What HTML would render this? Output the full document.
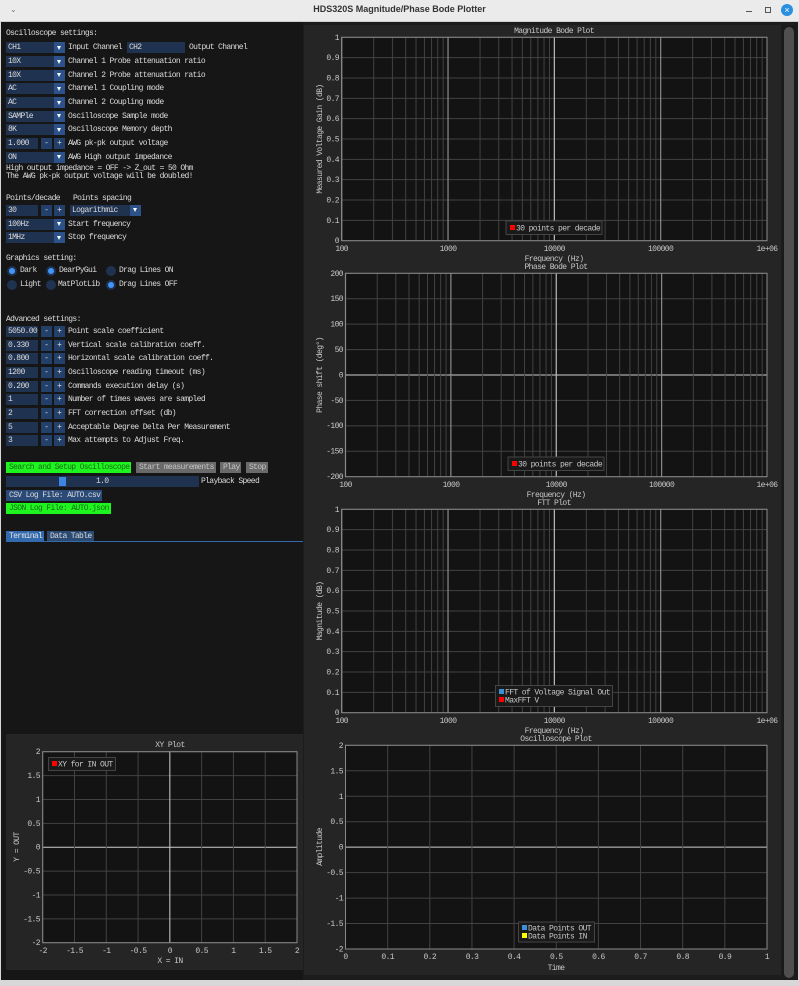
<!DOCTYPE html>
<html><head><meta charset="utf-8">
<style>
*{margin:0;padding:0;box-sizing:border-box}
body{width:799px;height:986px;background:#d8d8d8;position:relative;overflow:hidden;font-family:"Liberation Mono",monospace}
.a{position:absolute}
.t{position:absolute;font-size:8px;letter-spacing:-0.65px;color:#dcdcdc;white-space:pre;line-height:11px}
.f{position:absolute;height:11px;background:#1f3250;font-size:8px;letter-spacing:-0.65px;color:#dcdcdc;line-height:11px;padding-left:2px;white-space:pre}
.ar{position:absolute;right:0;top:0;width:11px;height:11px;background:#2d5289}
.ar:after{content:"";position:absolute;left:3px;top:3.5px;border-left:2.5px solid transparent;border-right:2.5px solid transparent;border-top:4px solid #fff}
.b{position:absolute;width:11px;height:11px;background:#23406a;color:#ddd;font-size:8px;line-height:11px;text-align:center}
.rd{position:absolute;width:10px;height:10px;border-radius:50%;background:#1f3250}
.rd.on:after{content:"";position:absolute;left:2px;top:2px;width:6px;height:6px;border-radius:50%;background:#4296fa}
.btn{position:absolute;height:11px;font-size:8px;letter-spacing:-0.65px;line-height:11px;padding-left:3px;white-space:pre}
svg text{font-family:"Liberation Mono",monospace;font-size:8px;letter-spacing:-0.6px;fill:#c8c8c8}
</style></head><body>
<div class="a" style="left:0;top:0;width:799px;height:22px;background:#ebebeb;border-bottom:1px solid #cfcfcf"></div>
<div class="a" style="left:0;top:4px;width:799px;text-align:center;font:bold 9px 'Liberation Sans',sans-serif;color:#333">HDS320S Magnitude/Phase Bode Plotter</div>
<div class="a" style="left:10px;top:5px;font:8px 'Liberation Sans';color:#777">&#8964;</div>
<div class="a" style="left:746px;top:11px;width:6px;height:1px;background:#555"></div>
<div class="a" style="left:765px;top:7px;width:6px;height:6px;border:1px solid #555"></div>
<div class="a" style="left:781px;top:4px;width:12px;height:12px;border-radius:50%;background:#2a8fde;color:#fff;font:9px 'Liberation Sans';text-align:center;line-height:12px">&#215;</div>
<div class="a" style="left:1px;top:22px;width:797px;height:958px;background:#161616"></div>
<div class="a" style="left:303px;top:22px;width:495px;height:958px;background:#1c1c1c"></div>
<div class="a" style="left:304px;top:25px;width:477px;height:950px;background:#252525"></div>
<div class="a" style="left:782px;top:25px;width:14px;height:951px;background:#1a1a1a"></div>
<div class="a" style="left:784px;top:27px;width:10px;height:951px;border-radius:5px;background:#4f4f4f"></div>
<div class="a" style="left:6px;top:734px;width:297px;height:236px;background:#252525"></div>

<div class="t" style="left:6px;top:28px">Oscilloscope settings:</div>
<div class="f" style="left:6px;top:42px;width:59px">CH1<div class="ar"></div></div><div class="t" style="left:68px;top:42px">Input Channel</div>
<div class="f" style="left:127px;top:42px;width:58px">CH2</div><div class="t" style="left:189px;top:42px">Output Channel</div>
<div class="f" style="left:6px;top:56px;width:59px">10X<div class="ar"></div></div><div class="t" style="left:68px;top:56px">Channel 1 Probe attenuation ratio</div>
<div class="f" style="left:6px;top:69.5px;width:59px">10X<div class="ar"></div></div><div class="t" style="left:68px;top:69.5px">Channel 2 Probe attenuation ratio</div>
<div class="f" style="left:6px;top:83px;width:59px">AC<div class="ar"></div></div><div class="t" style="left:68px;top:83px">Channel 1 Coupling mode</div>
<div class="f" style="left:6px;top:97px;width:59px">AC<div class="ar"></div></div><div class="t" style="left:68px;top:97px">Channel 2 Coupling mode</div>
<div class="f" style="left:6px;top:110.5px;width:59px">SAMPle<div class="ar"></div></div><div class="t" style="left:68px;top:110.5px">Oscilloscope Sample mode</div>
<div class="f" style="left:6px;top:124px;width:59px">8K<div class="ar"></div></div><div class="t" style="left:68px;top:124px">Oscilloscope Memory depth</div>
<div class="f" style="left:6px;top:138px;width:32px">1.000</div><div class="b" style="left:41px;top:138px">-</div><div class="b" style="left:54px;top:138px">+</div><div class="t" style="left:68px;top:138px">AWG pk-pk output voltage</div>
<div class="f" style="left:6px;top:151.5px;width:59px">ON<div class="ar"></div></div><div class="t" style="left:68px;top:151.5px">AWG High output impedance</div>
<div class="t" style="left:6px;top:165px;line-height:8px">High output impedance = OFF -&gt; Z_out = 50 Ohm
The AWG pk-pk output voltage will be doubled!</div>
<div class="t" style="left:6px;top:192.5px">Points/decade</div><div class="t" style="left:73px;top:192.5px">Points spacing</div>
<div class="f" style="left:6px;top:204.5px;width:32px">30</div><div class="b" style="left:41px;top:204.5px">-</div><div class="b" style="left:54px;top:204.5px">+</div>
<div class="f" style="left:70px;top:204.5px;width:71px">Logarithmic<div class="ar"></div></div>
<div class="f" style="left:6px;top:218.5px;width:59px">100Hz<div class="ar"></div></div><div class="t" style="left:68px;top:218.5px">Start frequency</div>
<div class="f" style="left:6px;top:232px;width:59px">1MHz<div class="ar"></div></div><div class="t" style="left:68px;top:232px">Stop frequency</div>

<div class="t" style="left:6px;top:253px">Graphics setting:</div>
<div class="rd on" style="left:7px;top:266px"></div><div class="t" style="left:20px;top:265px">Dark</div>
<div class="rd on" style="left:46px;top:266px"></div><div class="t" style="left:59px;top:265px">DearPyGui</div>
<div class="rd" style="left:106px;top:266px"></div><div class="t" style="left:119px;top:265px">Drag Lines ON</div>
<div class="rd" style="left:7px;top:279.5px"></div><div class="t" style="left:20px;top:279px">Light</div>
<div class="rd" style="left:46px;top:279.5px"></div><div class="t" style="left:58px;top:279px">MatPlotLib</div>
<div class="rd on" style="left:106px;top:279.5px"></div><div class="t" style="left:119px;top:279px">Drag Lines OFF</div>

<div class="t" style="left:6px;top:314px">Advanced settings:</div>
<div class="f" style="left:6px;top:326px;width:32px">5050.00</div><div class="b" style="left:41px;top:326px">-</div><div class="b" style="left:54px;top:326px">+</div><div class="t" style="left:68px;top:326px">Point scale coefficient</div>
<div class="f" style="left:6px;top:339.5px;width:32px">0.330</div><div class="b" style="left:41px;top:339.5px">-</div><div class="b" style="left:54px;top:339.5px">+</div><div class="t" style="left:68px;top:339.5px">Vertical scale calibration coeff.</div>
<div class="f" style="left:6px;top:353px;width:32px">0.800</div><div class="b" style="left:41px;top:353px">-</div><div class="b" style="left:54px;top:353px">+</div><div class="t" style="left:68px;top:353px">Horizontal scale calibration coeff.</div>
<div class="f" style="left:6px;top:367px;width:32px">1200</div><div class="b" style="left:41px;top:367px">-</div><div class="b" style="left:54px;top:367px">+</div><div class="t" style="left:68px;top:367px">Oscilloscope reading timeout (ms)</div>
<div class="f" style="left:6px;top:380.5px;width:32px">0.200</div><div class="b" style="left:41px;top:380.5px">-</div><div class="b" style="left:54px;top:380.5px">+</div><div class="t" style="left:68px;top:380.5px">Commands execution delay (s)</div>
<div class="f" style="left:6px;top:394px;width:32px">1</div><div class="b" style="left:41px;top:394px">-</div><div class="b" style="left:54px;top:394px">+</div><div class="t" style="left:68px;top:394px">Number of times waves are sampled</div>
<div class="f" style="left:6px;top:408px;width:32px">2</div><div class="b" style="left:41px;top:408px">-</div><div class="b" style="left:54px;top:408px">+</div><div class="t" style="left:68px;top:408px">FFT correction offset (db)</div>
<div class="f" style="left:6px;top:421.5px;width:32px">5</div><div class="b" style="left:41px;top:421.5px">-</div><div class="b" style="left:54px;top:421.5px">+</div><div class="t" style="left:68px;top:421.5px">Acceptable Degree Delta Per Measurement</div>
<div class="f" style="left:6px;top:435px;width:32px">3</div><div class="b" style="left:41px;top:435px">-</div><div class="b" style="left:54px;top:435px">+</div><div class="t" style="left:68px;top:435px">Max attempts to Adjust Freq.</div>

<div class="btn" style="left:6px;top:462px;width:125px;background:#1ef51e;color:#1a6a1a">Search and Setup Oscilloscope</div>
<div class="btn" style="left:136px;top:462px;width:80px;background:#6a6a6a;color:#c4c4c4">Start measurements</div>
<div class="btn" style="left:220px;top:462px;width:21px;background:#6a6a6a;color:#c4c4c4">Play</div>
<div class="btn" style="left:246px;top:462px;width:22px;background:#6a6a6a;color:#c4c4c4">Stop</div>
<div class="a" style="left:6px;top:476px;width:193px;height:11px;background:#1f3250"></div>
<div class="a" style="left:59px;top:477px;width:7px;height:9px;background:#3d85e0"></div>
<div class="t" style="left:96px;top:476px">1.0</div>
<div class="t" style="left:201px;top:476px">Playback Speed</div>
<div class="btn" style="left:6px;top:489.5px;width:96px;background:#2a4a78;color:#dcdcdc">CSV Log File: AUTO.csv</div>
<div class="btn" style="left:6px;top:503px;width:105px;background:#1ef51e;color:#1a6a1a">JSON Log File: AUTO.json</div>
<div class="btn" style="left:6px;top:531px;width:38px;background:#3369ad;color:#e4e4e4">Terminal</div>
<div class="btn" style="left:47px;top:531px;width:47px;background:#2a4a72;color:#dcdcdc">Data Table</div>
<div class="a" style="left:6px;top:541px;width:297px;height:1px;background:#3369ad"></div>

<svg class="a" style="left:0;top:0" width="799" height="986" id="g">
<g id="lines"></g>
<text x="554" y="33" text-anchor="middle">Magnitude Bode Plot</text>
<g text-anchor="end"><text x="339" y="40">1</text><text x="339" y="60">0.9</text><text x="339" y="80.5">0.8</text><text x="339" y="101">0.7</text><text x="339" y="121">0.6</text><text x="339" y="141.5">0.5</text><text x="339" y="162">0.4</text><text x="339" y="182">0.3</text><text x="339" y="202.5">0.2</text><text x="339" y="223">0.1</text><text x="339" y="243">0</text></g>
<g text-anchor="middle"><text x="341.7" y="251">100</text><text x="448" y="251">1000</text><text x="554.3" y="251">10000</text><text x="660.6" y="251">100000</text><text x="767" y="251">1e+06</text></g>
<text x="554" y="261" text-anchor="middle">Frequency (Hz)</text>
<text transform="translate(322,139) rotate(-90)" text-anchor="middle">Measured Voltage Gain (dB)</text>
<text x="556" y="269" text-anchor="middle">Phase Bode Plot</text>
<g text-anchor="end"><text x="343" y="276">200</text><text x="343" y="301">150</text><text x="343" y="326.5">100</text><text x="343" y="352">50</text><text x="343" y="377.5">0</text><text x="343" y="403">-50</text><text x="343" y="428">-100</text><text x="343" y="453.5">-150</text><text x="343" y="479">-200</text></g>
<g text-anchor="middle"><text x="345.5" y="487">100</text><text x="451" y="487">1000</text><text x="556.3" y="487">10000</text><text x="661.6" y="487">100000</text><text x="767" y="487">1e+06</text></g>
<text x="556" y="497" text-anchor="middle">Frequency (Hz)</text>
<text transform="translate(322,375) rotate(-90)" text-anchor="middle">Phase shift (deg°)</text>
<text x="554" y="505" text-anchor="middle">FTT Plot</text>
<g text-anchor="end"><text x="339" y="512">1</text><text x="339" y="532">0.9</text><text x="339" y="552.5">0.8</text><text x="339" y="573">0.7</text><text x="339" y="593">0.6</text><text x="339" y="613.5">0.5</text><text x="339" y="634">0.4</text><text x="339" y="654">0.3</text><text x="339" y="674.5">0.2</text><text x="339" y="695">0.1</text><text x="339" y="715">0</text></g>
<g text-anchor="middle"><text x="341.7" y="723">100</text><text x="448" y="723">1000</text><text x="554.3" y="723">10000</text><text x="660.6" y="723">100000</text><text x="767" y="723">1e+06</text></g>
<text x="554" y="733" text-anchor="middle">Frequency (Hz)</text>
<text transform="translate(322,611) rotate(-90)" text-anchor="middle">Magnitude (dB)</text>
<text x="556" y="741" text-anchor="middle">Oscilloscope Plot</text>
<g text-anchor="end"><text x="343" y="748">2</text><text x="343" y="773.5">1.5</text><text x="343" y="799">1</text><text x="343" y="824">0.5</text><text x="343" y="849.5">0</text><text x="343" y="875">-0.5</text><text x="343" y="900.5">-1</text><text x="343" y="926">-1.5</text><text x="343" y="951.5">-2</text></g>
<g text-anchor="middle"><text x="345.5" y="959">0</text><text x="387.7" y="959">0.1</text><text x="429.8" y="959">0.2</text><text x="472" y="959">0.3</text><text x="514.1" y="959">0.4</text><text x="556.3" y="959">0.5</text><text x="598.4" y="959">0.6</text><text x="640.6" y="959">0.7</text><text x="682.7" y="959">0.8</text><text x="724.9" y="959">0.9</text><text x="767" y="959">1</text></g>
<text x="556" y="970" text-anchor="middle">Time</text>
<text transform="translate(322,847) rotate(-90)" text-anchor="middle">Amplitude</text>
<text x="170" y="747" text-anchor="middle">XY Plot</text>
<g text-anchor="end"><text x="40" y="754">2</text><text x="40" y="778">1.5</text><text x="40" y="802">1</text><text x="40" y="826">0.5</text><text x="40" y="849.5">0</text><text x="40" y="873.5">-0.5</text><text x="40" y="897.5">-1</text><text x="40" y="921.5">-1.5</text><text x="40" y="945">-2</text></g>
<g text-anchor="middle"><text x="42.7" y="953">-2</text><text x="74.5" y="953">-1.5</text><text x="106.3" y="953">-1</text><text x="138" y="953">-0.5</text><text x="169.9" y="953">0</text><text x="201.7" y="953">0.5</text><text x="233.4" y="953">1</text><text x="265.2" y="953">1.5</text><text x="297" y="953">2</text></g>
<text x="170" y="963" text-anchor="middle">X = IN</text>
<text transform="translate(19,847) rotate(-90)" text-anchor="middle">Y = OUT</text>
<rect x="506" y="221" width="96" height="13.5" fill="#1a1a1a" stroke="#444"/><rect x="510" y="225" width="5" height="5" fill="#f00"/><text x="516" y="230.5">30 points per decade</text>
<rect x="508" y="457" width="96" height="13.5" fill="#1a1a1a" stroke="#444"/><rect x="512" y="461" width="5" height="5" fill="#f00"/><text x="518" y="466.5">30 points per decade</text>
<rect x="495.5" y="685.5" width="117" height="21" fill="#1a1a1a" stroke="#444"/><rect x="499" y="689" width="5" height="5" fill="#3a8fd6"/><text x="505" y="694.5">FFT of Voltage Signal Out</text><rect x="499" y="697" width="5" height="5" fill="#f00"/><text x="505" y="702.5">MaxFFT V</text>
<rect x="518.5" y="922" width="76" height="20" fill="#1a1a1a" stroke="#444"/><rect x="522" y="925" width="5" height="5" fill="#3a8fd6"/><text x="528" y="930.5">Data Points OUT</text><rect x="522" y="933" width="5" height="5" fill="#ff0"/><text x="528" y="938.5">Data Points IN</text>
<rect x="48.5" y="757.5" width="67" height="13" fill="#1a1a1a" stroke="#444"/><rect x="52" y="761" width="5" height="5" fill="#f00"/><text x="58" y="766.5">XY for IN OUT</text>
</svg>
<script>
(function(){
var ns="http://www.w3.org/2000/svg",g=document.getElementById("lines");
function L(x1,y1,x2,y2,c,w){var l=document.createElementNS(ns,"line");l.setAttribute("x1",x1);l.setAttribute("y1",y1);l.setAttribute("x2",x2);l.setAttribute("y2",y2);l.setAttribute("stroke",c);l.setAttribute("stroke-width",w||1);g.appendChild(l);}
function R(x,y,w,h){var r=document.createElementNS(ns,"rect");r.setAttribute("x",x);r.setAttribute("y",y);r.setAttribute("width",w);r.setAttribute("height",h);r.setAttribute("fill","#131313");g.appendChild(r);}
function plot(x0,x1,y0,y1,log,nx,ny,zx,zy){
 R(x0,y0,x1-x0,y1-y0);
 for(var j=0;j<=ny;j++){var y=y0+j*(y1-y0)/ny;L(x0,y,x1,y,j==zy?"#cfcfcf":"#424242");}
 if(log){for(var d=0;d<4;d++)for(var k=1;k<10;k++){var x=x0+(d+Math.log10(k))/4*(x1-x0);L(x,y0,x,y1,k==1?(d==2?"#bdbdbd":"#8a8a8a"):"#424242",k==1?1.2:1);}}
 else{for(var i=0;i<=nx;i++){var x=x0+i*(x1-x0)/nx;L(x,y0,x,y1,i==zx?"#cfcfcf":"#424242");}}
 var r=document.createElementNS(ns,"rect");r.setAttribute("x",x0);r.setAttribute("y",y0);r.setAttribute("width",x1-x0);r.setAttribute("height",y1-y0);r.setAttribute("fill","none");r.setAttribute("stroke","#8a8a8a");g.appendChild(r);
}
plot(341.7,767,37.3,240.7,1,0,10,-1,-1);
plot(345.5,767,273.3,476.7,1,0,8,-1,4);
plot(341.7,767,509.3,712.7,1,0,10,-1,-1);
plot(345.5,767,745.3,949,0,10,8,-1,4);
plot(42.7,297,751.7,942.7,0,8,8,4,4);
})();
</script>
</body></html>
